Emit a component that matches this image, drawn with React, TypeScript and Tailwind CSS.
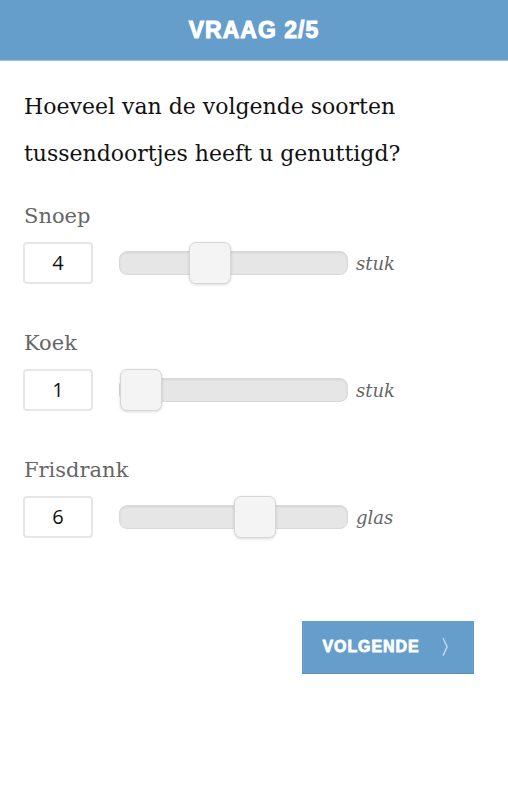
import React from 'react';

const serif = { fontFamily: '"DejaVu Serif", "Liberation Serif", serif' };
const heavy = { fontFamily: '"Liberation Sans", Arial, sans-serif' };

const ITEMS = [
    { label: 'Snoep', value: 4, unit: 'stuk' },
    { label: 'Koek', value: 1, unit: 'stuk' },
    { label: 'Frisdrank', value: 6, unit: 'glas' },
];

const MIN = 1;
const MAX = 9;

const Slider: React.FC<{ value: number }> = ({ value }) => {
    const pct = (value - MIN) / (MAX - MIN);
    return (
        <div className="relative w-[229px] h-[24px] rounded-[8px] bg-[#e6e6e6] border border-[#d9d9d9] shadow-[inset_0_1px_2px_rgba(0,0,0,0.08)]">
            {/* thumb */}
            <div
                className="absolute top-[-10px] w-[42px] h-[42px] rounded-[7px] bg-[#f4f4f4] border border-[#d6d6d6] shadow-[0_1px_3px_rgba(0,0,0,0.15)]"
                style={{ left: `calc(${pct} * (100% - 44px))` }}
            />
        </div>
    );
};

export default function App() {
    return (
        <div className="w-[508px] min-h-[800px] bg-white">
            <header className="h-[61px] bg-[#659ecb] border-b border-[#9fc1de] flex items-center justify-center">
                <h1 className="text-white text-[23px] font-black tracking-[1px] [-webkit-text-stroke:1px_white]" style={heavy}>
                    VRAAG 2/5
                </h1>
            </header>

            <main className="px-6 pt-[22px]" style={serif}>
                <p className="text-[22px] leading-[47px] text-[#111]">
                    Hoeveel van de volgende soorten tussendoortjes heeft u genuttigd?
                </p>

                <div className="mt-[26px] flex flex-col gap-[46px]">
                    {ITEMS.map((item) => (
                        <div key={item.label}>
                            <div className="text-[21px] leading-[26px] text-[#666]">{item.label}</div>
                            <div className="mt-[13px] flex items-center">
                                <div
                                    className="w-[70px] h-[42px] -ml-px border-2 border-[#e6e6e6] rounded-[4px] flex items-center justify-center text-[20px] text-[#111]"
                                    style={{ fontFamily: '"Open Sans", "Noto Sans", sans-serif' }}
                                >
                                    {item.value}
                                </div>
                                <div className="ml-[26px]">
                                    <Slider value={item.value} />
                                </div>
                                <span className="ml-[8px] italic text-[18px] text-[#666]">{item.unit}</span>
                            </div>
                        </div>
                    ))}
                </div>

                <div className="mt-[83px] flex justify-end pr-[10px]">
                    <button
                        className="w-[172px] h-[53px] bg-[#659ecb] border-b border-[#5a8fbb] text-white flex items-center justify-center gap-[20px] pl-[6px]"
                        style={heavy}
                    >
                        <span className="text-[16px] font-black tracking-[0.9px] [-webkit-text-stroke:0.8px_white]">VOLGENDE</span>
                        <span className="text-[20px] leading-none">〉</span>
                    </button>
                </div>
            </main>
        </div>
    );
}
